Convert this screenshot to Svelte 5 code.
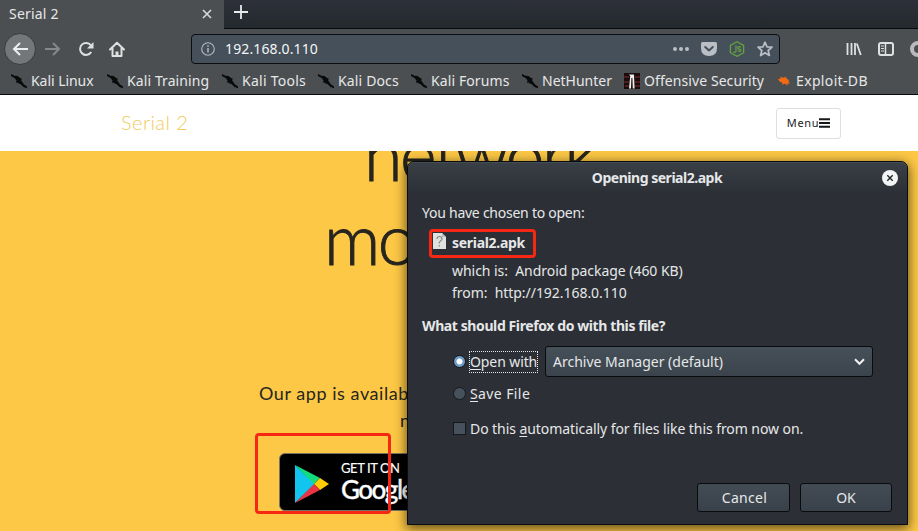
<script>
  const bookmarks = [
    { name: 'Kali Linux', icon: 'kali', width: 64, tracking: -0.05 },
    { name: 'Kali Training', icon: 'kali', width: 83, tracking: 0.1 },
    { name: 'Kali Tools', icon: 'kali', width: 64, tracking: 0.25 },
    { name: 'Kali Docs', icon: 'kali', width: 61, tracking: 0.15 },
    { name: 'Kali Forums', icon: 'kali', width: 79, tracking: 0.1 },
    { name: 'NetHunter', icon: 'kali', width: 70, tracking: 0 },
    { name: 'Offensive Security', icon: 'offsec', width: 120, tracking: 0.08 },
    { name: 'Exploit-DB', icon: 'exploit', width: 74, tracking: 0.35 }
  ];
</script>

<div class="screen">
  <header class="chrome">
    <div class="tabs">
      <div class="tab">
        <span>Serial 2</span>
        <svg width="10" height="10" viewBox="0 0 10 10"><path d="M1 1l8 8M9 1l-8 8" stroke="#d8d9da" stroke-width="1.6" /></svg>
      </div>
      <svg class="plus" width="14" height="14" viewBox="0 0 14 14"><path d="M7 0v14M0 7h14" stroke="#e8e9ea" stroke-width="1.8" /></svg>
    </div>

    <div class="nav">
      <div class="back">
        <svg width="16" height="14" viewBox="0 0 16 14"><path d="M8 1L2 7l6 6M2 7h14" fill="none" stroke="#eceded" stroke-width="2" /></svg>
      </div>
      <svg class="forward" width="16" height="14" viewBox="0 0 16 14"><path d="M8 1l6 6-6 6M14 7H0" fill="none" stroke="#85888a" stroke-width="2" /></svg>
      <svg class="reload" width="16" height="16" viewBox="0 0 16 16"><path d="M12.800 4.200A6 6 0 1 0 13.200 11" fill="none" stroke="#dfe0e0" stroke-width="2" /><path d="M15.500 1v6.500H9z" fill="#dfe0e0" /></svg>
      <svg class="home" width="16" height="16" viewBox="0 0 16 16"><path d="M1 8.500L8 1.700l7 6.800M3.500 7v8h9V7" fill="none" stroke="#dfe0e0" stroke-width="2" stroke-linejoin="round" stroke-linecap="round" /><path d="M6.500 15v-4.500h3V15z" fill="#dfe0e0" /></svg>
      <div class="url">
        <svg width="14" height="14" viewBox="0 0 14 14"><circle cx="7" cy="7" r="6.300" fill="none" stroke="#b3b9bf" stroke-width="1.100" /><path d="M7 6v4.500M7 3.200v1.500" stroke="#b3b9bf" stroke-width="1.500" /></svg>
        <span class="address">192.168.0.110</span>
        <svg width="16" height="16" viewBox="0 0 16 16" fill="#b9bfc5"><circle cx="2" cy="8" r="2" /><circle cx="8" cy="8" r="2" /><circle cx="14" cy="8" r="2" /></svg>
        <svg width="16" height="16" viewBox="0 0 16 16"><path d="M1.500 1h13Q16 1 16 2.500V7Q16 15 8 15T0 7V2.500Q0 1 1.500 1z" fill="#b9bfc5" /><path d="M4.200 6L8 9.500 11.800 6" fill="none" stroke="#46505b" stroke-width="2" stroke-linecap="round" stroke-linejoin="round" /></svg>
        <svg width="16" height="16" viewBox="0 0 16 16"><path d="M8 .8l6.600 3.600v7.300L8 15.300 1.400 11.700V4.400z" fill="none" stroke="#63a33e" stroke-width="1.300" /><path d="M7 4.500V10q0 1.500-1.500 1.500L4 10.800M12 6.200Q9 5 8.800 6.500T12 9q0 2-3.400 1" fill="none" stroke="#63a33e" stroke-width="1.200" /></svg>
        <svg width="16" height="16" viewBox="0 0 16 16"><path d="M8 1.200l2 4.600 5 .4-3.800 3.300L12.400 14.500 8 11.800l-4.400 2.700L4.800 9.500 1 6.200l5-.4z" fill="none" stroke="#b9bfc5" stroke-width="1.700" stroke-linejoin="round" /></svg>
      </div>
      <div class="tools">
        <svg width="16" height="16" viewBox="0 0 16 16"><path d="M1.500 2v12M5.500 2v12M9 2v12M10.800 2.500l4 11.500" stroke="#dfe0e0" stroke-width="1.800" /></svg>
        <svg width="16" height="16" viewBox="0 0 16 16"><rect x="1" y="2" width="14" height="12" rx="2" fill="none" stroke="#dfe0e0" stroke-width="2" /><path d="M7.500 2v12" stroke="#dfe0e0" stroke-width="1.500" /><path d="M3 5h3M3 7.500h3M3 10h3" stroke="#dfe0e0" /></svg>
        <svg width="16" height="16" viewBox="0 0 16 16"><circle cx="8" cy="8" r="6" fill="none" stroke="#b9babb" stroke-width="4" /></svg>
      </div>
    </div>

    <nav class="bookmarks">
      {#each bookmarks as b}
        <div class="bookmark">
          {#if b.icon === 'kali'}
            <svg width="16" height="16" viewBox="0 0 16 16"><path d="M0 1l3.500 1.800 3 .2 2.900 2.300 1.200-.2-.4 2.300 2.600 3.800 3.200 2.400v1.600L12.500 14 9.200 10.800 8 11l-1-1.500-2 .2.500-2.400L3.500 5 0 3z" fill="#08090a" /></svg>
          {:else if b.icon === 'offsec'}
            <svg width="16" height="16" viewBox="0 0 16 16"><rect width="16" height="16" fill="#1b0b0c" /><path d="M0 4h5M0 9h5M11 4h5M11 9h5M1 13h4M11 13h5" stroke="#5c2426" stroke-width="1.500" /><path d="M5 1.500h5l.6 14H8.800L8.400 5 7.400 5 7 15.500H5L6.200 3z" fill="#eee" /></svg>
          {:else}
            <svg width="16" height="16" viewBox="0 0 16 16"><path d="M2 6l2.500-.2L4.500 3.800 7 4.800l3-.8.8 2 2.200.8L12.500 8.500l1.500 2-2.500-.3.500 2.200-3-1.700-2.500.8L6 9.500 3.500 8.500z" fill="#f26a14" /></svg>
          {/if}
          <span style="width: {b.width}px; letter-spacing: {b.tracking}px">{b.name}</span>
        </div>
      {/each}
    </nav>
  </header>

  <main>
    <div class="site-nav">
      <span class="brand">Serial 2</span>
      <button class="menu">Menu<svg width="11" height="10" viewBox="0 0 11 10"><path d="M0 1.200h11M0 5h11M0 8.800h11" stroke="#16181b" stroke-width="1.900" /></svg></button>
    </div>
    <section class="hero">
      <h1><span>network</span><span class="second">mobile</span></h1>
      <p><span>Our app is available</span><span class="now">now</span></p>
      <div class="badge">
        <svg width="36" height="40" viewBox="0 0 36 40">
          <path d="M1 1v38l20-19z" fill="#12c5ef" />
          <path d="M1 1l25 13-6 6z" fill="#12dc7d" />
          <path d="M26 14l9 6-9 6-6-6z" fill="#ffcd05" />
          <path d="M1 39l25-13-6-6z" fill="#e83444" />
        </svg>
        <div class="badge-copy"><small>GET IT ON</small><strong>Google</strong></div>
      </div>
    </section>
  </main>

  <div class="mark store"></div>

  <div class="dialog">
    <div class="titlebar">
      <span>Opening serial2.apk</span>
      <svg width="16" height="16" viewBox="0 0 16 16"><circle cx="8" cy="8" r="8" fill="#f3f4f4" /><path d="M5.300 5.300l5.400 5.400M10.700 5.300l-5.400 5.400" stroke="#22262b" stroke-width="1.400" /></svg>
    </div>
    <div class="chosen">You have chosen to open:</div>
    <div class="file">
      <svg width="13" height="16" viewBox="0 0 13 16"><path d="M0 0h9l4 4v12H0z" fill="#e1e2e0" /><path d="M9 0v4h4" fill="#b9bbb8" /><path d="M4 6q0-2.500 2.500-2.500T9 6q0 1-1.500 2t-1.200 2.500M6.300 12v1.500" fill="none" stroke="#868987" stroke-width="1.200" /></svg>
      <b>serial2.apk</b>
    </div>
    <div class="detail">which is: &nbsp;Android package (460 KB)</div>
    <div class="detail from">from: &nbsp;http://192.168.0.110</div>
    <div class="question">What should Firefox do with this file?</div>
    <div class="choice open">
      <i class="radio on"></i><span class="focus"><u>O</u>pen with</span>
      <div class="select"><span>Archive Manager (default)</span>
        <svg width="11" height="8" viewBox="0 0 11 8"><path d="M1 1.300l4.500 4.500L10 1.300" fill="none" stroke="#f0f1f1" stroke-width="2" /></svg>
      </div>
    </div>
    <div class="choice save"><i class="radio"></i><span><u>S</u>ave File</span></div>
    <div class="choice auto"><i class="check"></i><span>Do this <u>a</u>utomatically for files like this from now on.</span></div>
    <div class="actions"><button class="cancel">Cancel</button><button>OK</button></div>
  </div>
  <div class="mark filename"></div>
</div>

<style>
  :global(body) { margin: 0; overflow: hidden; }
  * { box-sizing: border-box; }
  svg { display: block; flex: none; }
  button { font: inherit; color: inherit; padding: 0; }
  .screen { position: relative; width: 918px; height: 531px; overflow: hidden; font: 14px/20px "Noto Sans", sans-serif; color: #e6e7e8; white-space: nowrap; }
  .chrome { height: 95px; background: #4b4f52; border-bottom: 1px solid #07090b; overflow: hidden; }
  .tabs { display: flex; height: 29px; background: linear-gradient(#2d3039, #24292d); }
  .tab { width: 224px; background: #4b4f52; display: flex; justify-content: space-between; align-items: center; padding: 0 12px 2px 9px; letter-spacing: .2px; }
  .plus { margin: 5px 0 0 10px; }
  .tabs::after { content: ""; flex: 1; margin-left: -24px; border-bottom: 1px solid #08090b; }
  .nav { display: flex; align-items: center; height: 39px; padding-left: 4px; }
  .back { flex: none; width: 32px; height: 32px; border-radius: 50%; background: #747779; border: 1px solid #393c3e; display: grid; place-items: center; }
  .forward { margin-left: 9px; }
  .reload { margin-left: 17px; }
  .home { margin-left: 15px; }
  .url { flex: none; display: flex; align-items: center; width: 589px; height: 30px; margin-left: 66px; padding: 0 6px 0 9px; background: #46505b; border: 1px solid #0c0f12; border-radius: 4px; gap: 12px; }
  .url > svg:first-child { margin-right: -2px; }
  .address { flex: 1; color: #f4f5f5; letter-spacing: .12px; }
  .tools { display: flex; gap: 16px; margin-left: 66px; }
  .bookmarks { display: flex; gap: 12px; padding: 3px 0 0 11px; }
  .bookmark { display: flex; flex: none; align-items: center; gap: 4px; height: 20px; }
  .site-nav { height: 56px; background: #fff; display: flex; align-items: center; justify-content: space-between; padding: 0 77px 0 120px; }
  .brand { font: 300 20px/24px Lato, sans-serif; color: #f0cb5c; letter-spacing: .45px; padding: 0 0 3px 1px; }
  .menu { display: flex; align-items: center; justify-content: center; width: 65px; height: 31px; background: #fff; color: #222; border: 1px solid #dedede; border-radius: 3px; font: 11px/16px "Noto Sans", sans-serif; letter-spacing: .65px; }
  .menu svg { margin-top: -1px; }
  .hero { height: 380px; background: #fdc845; overflow: hidden; color: #27251f; }
  h1 { margin: -39px 0 0 364px; font: 300 70px/84px Lato, sans-serif; height: 168px; letter-spacing: -2.6px; -webkit-text-stroke: .9px #27251f; }
  h1 span { display: block; }
  h1 .second { margin-left: -40px; }
  p { margin: 100px 0 0 259px; font: 18px/27px Lato, sans-serif; letter-spacing: .55px; }
  p span { display: block; }
  p .now { margin-left: 141px; }
  .badge { display: flex; width: 194px; height: 58px; margin: 19px 0 0 279px; padding: 10px 0 0 14px; border-radius: 6px; background: #000; border: 1px solid #777463; color: #fff; }
  .badge-copy { display: flex; flex-direction: column; margin: -4px 0 0 11px; font-family: Lato, sans-serif; }
  small { font-size: 13px; line-height: 16px; letter-spacing: -.4px; -webkit-text-stroke: .15px #fff; }
  strong { font-size: 26px; line-height: 26px; font-weight: 500; letter-spacing: -1.500px; -webkit-text-stroke: .3px #fff; }
  .mark { position: absolute; border: 3px solid #f62814; border-radius: 4px; }
  .store { left: 255px; top: 433px; width: 136px; height: 81px; }
  .filename { left: 429px; top: 229px; width: 107px; height: 29px; }
  .dialog { position: absolute; left: 407px; top: 161px; width: 501px; height: 364px; background: #2c3036; border: 1px solid #0a0c0e; border-radius: 7px 7px 0 0; box-shadow: 0 3px 12px 1px #0009; padding: 0 14px; }
  .titlebar { height: 32px; margin: 0 -14px; padding-right: 9px; display: flex; align-items: center; border-radius: 6px 6px 0 0; background: linear-gradient(#3a4047, #2c3036); font-weight: 700; letter-spacing: -.48px; box-shadow: inset 0 1px #454c53; }
  .titlebar span { flex: 1; text-align: center; padding-left: 24px; }
  .chosen { margin-top: 9px; letter-spacing: -.25px; }
  .file { display: flex; margin: 10px 0 0 11px; gap: 6px; letter-spacing: -.3px; }
  .detail { margin: 8px 0 0 30px; letter-spacing: -.04px; }
  .from { margin-top: 2px; }
  .question { margin-top: 13px; font-weight: 700; letter-spacing: -.4px; }
  .choice { display: flex; align-items: center; margin-left: 31px; gap: 4px; }
  .open { height: 31px; margin-top: 10px; }
  .save { margin-top: 7px; letter-spacing: .4px; }
  .auto { margin-top: 15px; letter-spacing: -.07px; }
  .radio, .check { width: 13px; height: 13px; border: 1px solid #15191d; background: #46515c; }
  .radio { border-radius: 50%; margin-top: -1px; }
  .check { margin-top: -1px; }
  .radio.on { background: radial-gradient(circle, #fff 0 2.500px, #6b9ac4 3.500px); }
  .focus { outline: 1px dotted #e6e7e8; width: 67px; letter-spacing: -.1px; }
  u { text-decoration-thickness: 1px; text-underline-offset: 2px; }
  .select { width: 328px; height: 31px; margin-left: 4px; padding: 0 7px; display: flex; align-items: center; justify-content: space-between; border: 1px solid #090b0d; border-radius: 3px; background: linear-gradient(#465059, #3b444c); }
  .actions { display: flex; justify-content: flex-end; gap: 10px; margin-top: 44px; padding-right: 1px; }
  .actions button { width: 92px; height: 29px; border: 1px solid #090b0d; border-radius: 3px; background: linear-gradient(#434c55, #39424a); }
  .actions .cancel { width: 93px; padding-left: 2px; letter-spacing: .3px; }
</style>
